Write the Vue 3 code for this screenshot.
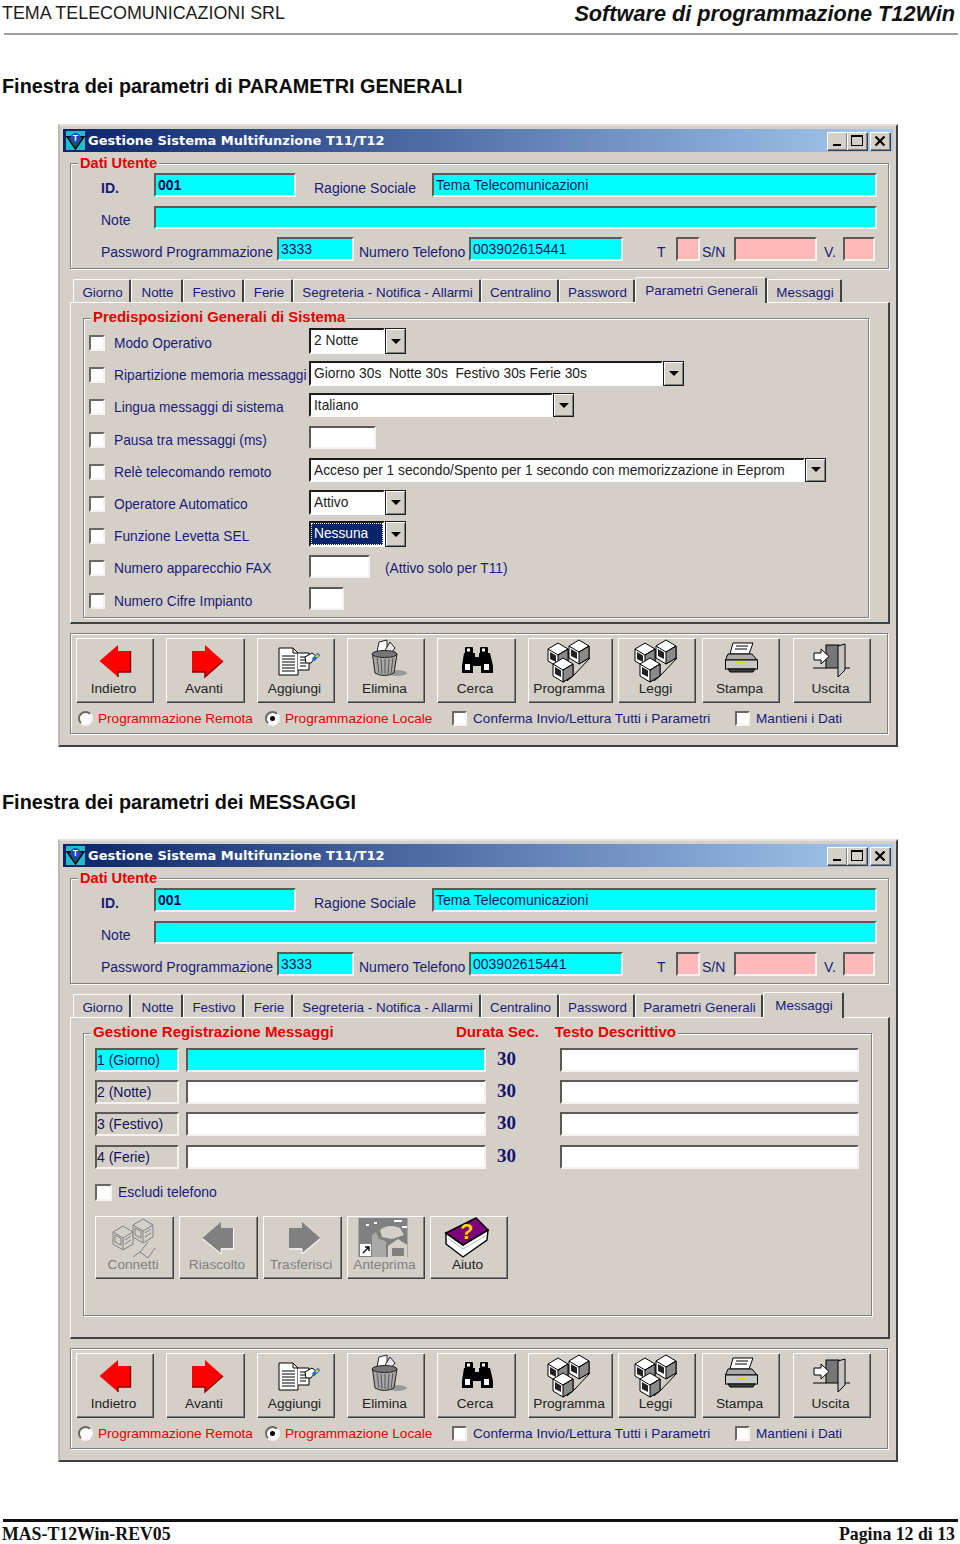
<template>
  <div class="page">
    <svg class="sprites" aria-hidden="true">
      <defs>
        <g id="i-back">
          <polygon points="6.5,21 25,5 25,11 37.5,11 37.5,32 25,32 25,37" fill="#f00" />
          <path d="M37.5 11V32H25V37" stroke="#800" stroke-width="1.4" fill="none" />
        </g>
        <g id="i-fwd">
          <polygon points="9,11 22,11 22,5 40,21 22,37 22,32 9,32" fill="#f00" />
          <path d="M9 32H22V37L40 21" stroke="#800" stroke-width="1.4" fill="none" />
        </g>
        <g id="i-back-off">
          <polygon points="6.5,20 25,4 25,10 37.5,10 37.5,30 25,30 25,35" fill="#808080" />
          <path d="M37.5 10V31H25V36L7 21" stroke="#fff" stroke-width="1" fill="none" />
        </g>
        <g id="i-fwd-off">
          <polygon points="9,10 22,10 22,4 40,20 22,35 22,30 9,30" fill="#808080" />
          <path d="M9 31H22V36L40 21" stroke="#fff" stroke-width="1" fill="none" />
        </g>
        <g id="i-add" stroke="#000" fill="#fff">
          <path d="M5 8H19L24 13V35H5Z" />
          <path d="M19 8V13H24" fill="none" />
          <path d="M8 16H21M8 19H21M8 22H21M8 25H21M8 28H21M8 31H21" fill="none" />
          <path d="M24 13H35V30H24" />
          <path d="M26 17h6M26 20h6M26 23h6M26 26h6" fill="none" />
          <path d="M31 17L38 13L42 16L37 23H32Z" />
          <path d="M39 20L45 14" stroke="#1e6ad0" stroke-width="3.5" fill="none" />
          <path d="M42 17L44 15" stroke="#ffd800" stroke-width="2" fill="none" />
        </g>
        <g id="i-del">
          <ellipse cx="33" cy="33" rx="10" ry="3" fill="#999" />
          <polygon points="13,12 15,2 23,0 23,12" fill="#fff" stroke="#222" />
          <polygon points="20,12 26,2 31,8 27,13" fill="#e8e8e8" stroke="#222" />
          <path d="M8.5 14L11 33Q20 38 30 33L33 14Z" fill="#a8a8a8" stroke="#222" />
          <path d="M13 18L15 33M17 19L18 34M21 19V34M25 19L24 34M29 18L27 33" stroke="#555" fill="none" />
          <ellipse cx="20.5" cy="14" rx="12.5" ry="3.5" fill="#777" stroke="#222" />
        </g>
        <g id="i-find">
          <rect x="11" y="7" width="8" height="7" rx="1" fill="#000" />
          <rect x="26" y="7" width="8" height="7" rx="1" fill="#000" />
          <path d="M10 13H21V17H25V13H36L39 26V33H27V26H19V33H8V26Z" fill="#000" />
          <rect x="13" y="8.5" width="3" height="3" fill="#fff" />
          <rect x="28" y="8.5" width="3" height="3" fill="#fff" />
          <rect x="11" y="24" width="5" height="6" fill="#fff" />
          <rect x="30" y="24" width="5" height="6" fill="#fff" />
        </g>
        <g id="pc">
          <polygon points="0,6 10,0 20,6 20,18 10,24 0,18" fill="#fff" stroke="#000" />
          <polygon points="10,12 20,6 20,18 10,24" fill="#8a8a8a" stroke="#000" />
          <polygon points="2,9 8,12.5 8,19 2,16" fill="#222" />
          <path d="M0 6L10 12L20 6" fill="none" stroke="#000" />
        </g>
        <g id="pc-off">
          <polygon points="0,6 10,0 20,6 20,18 10,24 0,18" fill="#d4d0c8" stroke="#808080" />
          <path d="M0 6L10 12L20 6M10 12V24M12 14L18 10M12 18L18 14" fill="none" stroke="#808080" />
          <polygon points="2,9 8,12.5 8,19 2,16" fill="none" stroke="#808080" />
        </g>
        <g id="i-net">
          <path d="M19 41L26 35L42 18" stroke="#000" fill="none" />
          <use href="#pc" x="0" y="3" />
          <use href="#pc" x="21" y="0" />
          <use href="#pc" x="5" y="18" />
        </g>
        <g id="i-net-off">
          <path d="M21 39L28 34L36 40L43 30M28 34L36 24" stroke="#808080" fill="none" />
          <use href="#pc-off" x="1" y="8" />
          <use href="#pc-off" x="21" y="1" />
        </g>
        <g id="i-print" stroke="#000">
          <polygon points="14,3 34,3 30,14 11,14" fill="#fff" />
          <path d="M17 6H29M16 9H28" fill="none" />
          <polygon points="9,14 33,14 38,20 6.5,20" fill="#aaa" />
          <rect x="6.5" y="20" width="32" height="9" fill="#c8c8c8" />
          <rect x="19" y="22" width="8" height="2" fill="#e8d800" stroke="none" />
          <polygon points="9,29 36,29 34,32 11,32" fill="#444" />
        </g>
        <g id="i-exit" stroke="#000">
          <path d="M3 28H16M34 28H40" fill="none" />
          <rect x="16" y="5" width="13" height="23" fill="#777" />
          <polygon points="28,6 35,4 35,30 28,37" fill="#c4c4c4" />
          <polygon points="4,13 11,13 11,9 19,16.5 11,24 11,20 4,20" fill="#fff" />
        </g>
        <g id="i-preview">
          <rect x="-5.5" y="0" width="49" height="39" fill="#808080" />
          <path d="M16 12Q24 5 36 10L40 17L28 21L18 19Z" fill="#d4d0c8" />
          <path d="M8 26V17L12 14L15 21L22 23V39H8Z" fill="#a8a8a8" />
          <path d="M24 28L34 21L43 27V39H24Z" fill="#d4d0c8" />
          <path d="M28 30H40V38H28Z" fill="#808080" />
          <path d="M2 6H5V8H2ZM10 4H13V6H10ZM30 2H38V4H30ZM38 8H43V10H38Z" fill="#fff" />
          <rect x="-4" y="26" width="11" height="12" fill="#fff" />
          <path d="M-1 35L4 30M1 29H5V33" stroke="#000" stroke-width="1.4" fill="none" />
        </g>
        <g id="i-help" stroke="#000">
          <polygon points="-1,15 16,27 41,12 40,22 16,39 -1,26" fill="#fff" stroke-width="1.4" />
          <path d="M1 20L16 31L40 17" fill="none" stroke="#b8b8c8" />
          <polygon points="-1,15 29,0 41,12 16,27" fill="#800080" stroke-width="1.6" />
          <text x="13" y="21" class="book-mark" stroke="none">?</text>
        </g>
      </defs>
    </svg>

    <header class="doc-head">
      <span class="company">TEMA TELECOMUNICAZIONI SRL</span>
      <span class="software">Software di programmazione T12Win</span>
    </header>
    <div class="doc-rule"></div>

    <template v-for="win in windows" :key="win.heading">
      <h2 class="heading" :class="{ 'heading-second': win.kind === 'msg' }">{{ win.heading }}</h2>

      <section class="window">
        <div class="titlebar">
          <svg class="logo" viewBox="0 0 20 20">
            <rect width="20" height="20" fill="#23bccc" />
            <polygon points="1,6 19,6 10,19" fill="#0f5a6a" stroke="#000" stroke-width="1.5" />
            <circle cx="10" cy="7.5" r="5.5" fill="#2048b0" />
            <text x="7" y="11" class="logo-t">T</text>
          </svg>
          <span class="title-text">Gestione Sistema Multifunzione T11/T12</span>
          <div class="win-btns">
            <span class="win-btn"><i class="glyph-min"></i></span>
            <span class="win-btn"><i class="glyph-max"></i></span>
            <span class="win-btn win-close">
              <svg width="12" height="10" viewBox="0 0 12 10"><path d="M1.5 0.5L10.5 9.5M10.5 0.5L1.5 9.5" stroke="#000" stroke-width="2.2" /></svg>
            </span>
          </div>
        </div>

        <div class="group dati">
          <div class="legend">Dati Utente</div>
          <div class="dati-row row-id">
            <span class="lbl lbl-bold" style="width: 53px">ID.</span>
            <span class="field cyan strong" style="width: 142px">001</span>
            <span class="lbl" style="width: 118px; margin-left: 18px">Ragione Sociale</span>
            <span class="field cyan" style="width: 445px">Tema Telecomunicazioni</span>
          </div>
          <div class="dati-row row-note">
            <span class="lbl" style="width: 53px">Note</span>
            <span class="field cyan" style="width: 723px"></span>
          </div>
          <div class="dati-row row-pass">
            <template v-for="cell in passRow" :key="cell.key">
              <span v-if="cell.text && !cell.tone" class="lbl" :style="boxStyle(cell)">{{ cell.text }}</span>
              <span v-else class="field" :class="cell.tone" :style="boxStyle(cell)">{{ cell.text }}</span>
            </template>
          </div>
        </div>

        <div class="tabs">
          <span
            v-for="tab in win.tabs"
            :key="tab.name"
            class="tab"
            :class="{ active: tab.name === win.active }"
            :style="{ width: tab.w + 'px' }"
          >{{ tab.name }}</span>
        </div>

        <div class="tab-panel">
          <!-- parametri generali -->
          <div v-if="win.kind === 'gen'" class="group params">
            <div class="legend legend-big">Predisposizioni Generali di Sistema</div>
            <div v-for="row in paramRows" :key="row.label" class="param-row">
              <span class="check"></span>
              <span class="lbl param-lbl">{{ row.label }}</span>
              <div v-if="row.combo" class="combo" :style="{ width: row.w + 'px', height: row.h + 'px' }">
                <span class="combo-text" :class="{ focused: row.focus }">{{ row.value }}</span>
                <span class="combo-btn"><i class="arrow-down"></i></span>
              </div>
              <span v-else class="field white param-field" :style="{ width: row.w + 'px', height: row.h + 'px' }"></span>
              <span v-if="row.note" class="lbl param-note">{{ row.note }}</span>
            </div>
          </div>

          <!-- messaggi -->
          <div v-else class="group msgs">
            <div class="legend legend-big legend-msg">
              <span class="lg-a">Gestione Registrazione Messaggi</span>
              <span class="lg-b">Durata Sec.</span>
              <span class="lg-c">Testo Descrittivo</span>
            </div>
            <div v-for="(m, i) in messages" :key="m" class="msg-row">
              <span class="field msg-name" :class="i === 0 ? 'cyan' : 'flat'">{{ m }}</span>
              <span class="field msg-wide" :class="i === 0 ? 'cyan' : 'white'"></span>
              <span class="msg-secs">30</span>
              <span class="field white msg-desc"></span>
            </div>
            <div class="exclude">
              <span class="check"></span>
              <span class="lbl exclude-lbl">Escludi telefono</span>
            </div>
            <div class="msg-btns">
              <button v-for="b in msgButtons" :key="b.label" class="tool-btn tool-short" :class="{ off: b.off }" :style="{ width: b.w + 'px' }">
                <svg class="ico" viewBox="0 0 44 40"><use :href="'#i-' + b.icon" /></svg>
                <span class="tool-label">{{ b.label }}</span>
              </button>
            </div>
          </div>
        </div>

        <div class="group footer-panel">
          <div class="tool-row">
            <button v-for="b in toolButtons" :key="b.label" class="tool-btn" :style="{ width: b.w + 'px', marginLeft: b.ml + 'px' }">
              <svg class="ico" viewBox="0 0 44 40"><use :href="'#i-' + b.icon" /></svg>
              <span class="tool-label">{{ b.label }}</span>
            </button>
          </div>
          <div class="opt-row">
            <label v-for="o in options" :key="o.label" class="opt" :style="{ width: o.w + 'px' }">
              <span v-if="o.radio" class="radio" :class="{ on: o.on }"></span>
              <span v-else class="check small"></span>
              <span class="opt-text" :class="{ red: o.radio }">{{ o.label }}</span>
            </label>
          </div>
        </div>
      </section>
    </template>

    <div class="foot-rule"></div>
    <footer class="doc-foot">
      <span>MAS-T12Win-REV05</span>
      <span>Pagina 12 di 13</span>
    </footer>
  </div>
</template>

<script setup>
const baseTabs = [
  { name: 'Giorno', w: 58 },
  { name: 'Notte', w: 52 },
  { name: 'Festivo', w: 61 },
  { name: 'Ferie', w: 49 },
  { name: 'Segreteria - Notifica - Allarmi', w: 188 },
  { name: 'Centralino', w: 78 },
  { name: 'Password', w: 76 },
]

const windows = [
  {
    kind: 'gen',
    heading: 'Finestra dei parametri di PARAMETRI GENERALI',
    active: 'Parametri Generali',
    tabs: [...baseTabs, { name: 'Parametri Generali', w: 132 }, { name: 'Messaggi', w: 75 }],
  },
  {
    kind: 'msg',
    heading: 'Finestra dei parametri dei MESSAGGI',
    active: 'Messaggi',
    tabs: [...baseTabs, { name: 'Parametri Generali', w: 128 }, { name: 'Messaggi', w: 81 }],
  },
]

const passRow = [
  { key: 'a', text: 'Password Programmazione', w: 176 },
  { key: 'b', text: '3333', w: 77, tone: 'cyan' },
  { key: 'c', text: 'Numero Telefono', w: 110, ml: 5 },
  { key: 'd', text: '003902615441', w: 154, tone: 'cyan' },
  { key: 'e', text: 'T', w: 19, ml: 34 },
  { key: 'f', text: '', w: 24, tone: 'pink' },
  { key: 'g', text: 'S/N', w: 32, ml: 2 },
  { key: 'h', text: '', w: 83, tone: 'pink' },
  { key: 'i', text: 'V.', w: 19, ml: 7 },
  { key: 'j', text: '', w: 32, tone: 'pink' },
]

const paramRows = [
  { label: 'Modo Operativo', combo: true, value: '2 Notte', w: 97, h: 26 },
  { label: 'Ripartizione memoria messaggi', combo: true, value: 'Giorno 30s  Notte 30s  Festivo 30s Ferie 30s', w: 375, h: 25 },
  { label: 'Lingua messaggi di sistema', combo: true, value: 'Italiano', w: 265, h: 24 },
  { label: 'Pausa tra messaggi (ms)', w: 67, h: 23 },
  { label: 'Relè telecomando remoto', combo: true, value: 'Acceso per 1 secondo/Spento per 1 secondo con memorizzazione in Eeprom', w: 517, h: 24 },
  { label: 'Operatore Automatico', combo: true, value: 'Attivo', w: 97, h: 25 },
  { label: 'Funzione Levetta SEL', combo: true, value: 'Nessuna', w: 97, h: 26, focus: true },
  { label: 'Numero apparecchio FAX', w: 61, h: 23, note: '(Attivo solo per T11)' },
  { label: 'Numero Cifre Impianto', w: 35, h: 23 },
]

const messages = ['1 (Giorno)', '2 (Notte)', '3 (Festivo)', '4 (Ferie)']

const msgButtons = [
  { label: 'Connetti', icon: 'net-off', w: 78, off: true },
  { label: 'Riascolto', icon: 'back-off', w: 78, off: true },
  { label: 'Trasferisci', icon: 'fwd-off', w: 78, off: true },
  { label: 'Anteprima', icon: 'preview', w: 77, off: true },
  { label: 'Aiuto', icon: 'help', w: 77 },
]

const toolButtons = [
  { label: 'Indietro', icon: 'back', w: 77, ml: 0 },
  { label: 'Avanti', icon: 'fwd', w: 78, ml: 13 },
  { label: 'Aggiungi', icon: 'add', w: 77, ml: 13 },
  { label: 'Elimina', icon: 'del', w: 77, ml: 13 },
  { label: 'Cerca', icon: 'find', w: 78, ml: 13 },
  { label: 'Programma', icon: 'net', w: 84, ml: 13 },
  { label: 'Leggi', icon: 'net', w: 77, ml: 6 },
  { label: 'Stampa', icon: 'print', w: 77, ml: 7 },
  { label: 'Uscita', icon: 'exit', w: 77, ml: 14 },
]

const options = [
  { label: 'Programmazione Remota', radio: true, w: 187 },
  { label: 'Programmazione Locale', radio: true, on: true, w: 187 },
  { label: 'Conferma Invio/Lettura Tutti i Parametri', w: 283 },
  { label: 'Mantieni i Dati', w: 120 },
]

const boxStyle = (cell) => ({ width: cell.w + 'px', marginLeft: (cell.ml || 0) + 'px' })
</script>

<style>
html, body { background: #fff; }
</style>

<style scoped>
.page {
  width: 960px;
  height: 1544px;
  overflow: hidden;
  background: #fff;
  font-family: "Liberation Sans", Arial, sans-serif;
  color: #000;
}

.sprites { position: absolute; width: 0; height: 0; }

.doc-head {
  display: flex;
  justify-content: space-between;
  align-items: center;
  height: 25px;
  padding: 1px 5px 0 2px;
  margin-bottom: 7px;
}
.company { font-size: 17.9px; color: #1c1c1c; }
.software { font-size: 21.7px; font-weight: bold; font-style: italic; color: #111; }
.doc-rule { height: 2px; margin: 0 2px 0 4px; background: #a0a0a0; }

.heading {
  margin: 39px 0 26px 2px;
  font-size: 19.85px;
  line-height: 24px;
  font-weight: bold;
  color: #0c0c0c;
}
.heading-second { margin: 43px 0 25px 2px; }

/* ---- window ---- */
.window {
  box-sizing: border-box;
  width: 840px;
  height: 623px;
  margin-left: 58px;
  padding: 3px;
  background: #d4d0c8;
  border: 2px solid;
  border-color: #e4e2dc #404040 #404040 #bcb9b2;
  font-size: 14px;
}

.titlebar {
  display: flex;
  align-items: center;
  height: 23px;
  padding-left: 3px;
  background: linear-gradient(90deg, #0a246a 0%, #a6caf0 100%);
}
.logo { width: 19px; height: 19px; flex: none; }
.logo-t { font: bold 9px "Liberation Sans", sans-serif; fill: #fff; }
.title-text {
  margin-left: 3px;
  font-family: "DejaVu Sans", sans-serif;
  font-size: 13px;
  font-weight: bold;
  color: #fff;
  white-space: nowrap;
}
.win-btns { display: flex; margin-left: auto; margin-right: 3px; }
.win-btn {
  box-sizing: border-box;
  display: flex;
  align-items: center;
  justify-content: center;
  width: 20px;
  height: 18px;
  background: #d4d0c8;
  box-shadow: inset 1px 1px #fff, inset -1px -1px #808080, 1px 1px #404040;
}
.win-close { margin-left: 3px; }
.glyph-min { width: 8px; height: 2px; margin-top: 9px; background: #000; }
.glyph-max { box-sizing: border-box; width: 12px; height: 11px; border: 1px solid #000; border-top-width: 2px; }

.group {
  position: relative;
  box-sizing: border-box;
  border: 1px solid #808080;
  box-shadow: inset 1px 1px #fff, 1px 1px #fff;
}
.legend {
  position: absolute;
  top: -8px;
  left: 7px;
  padding: 0 2px;
  background: #d4d0c8;
  color: #e60000;
  font-size: 14.6px;
  line-height: 15px;
  font-weight: bold;
  white-space: nowrap;
}

.dati {
  width: 819px;
  height: 106px;
  margin: 11px 0 0 7px;
  padding-left: 30px;
}
.dati-row { display: flex; align-items: center; }
.row-id { height: 24px; margin-top: 9px; }
.row-note { height: 23px; margin-top: 9px; }
.row-pass { height: 24px; margin-top: 8px; }

.lbl {
  display: block;
  flex: none;
  margin-top: 5px;
  color: #1a1a78;
  white-space: nowrap;
}
.lbl-bold { font-weight: bold; }

.field {
  box-sizing: border-box;
  display: block;
  flex: none;
  align-self: stretch;
  padding-left: 2px;
  border: 2px solid;
  border-color: #5c5a56 #f4f3ef #f4f3ef #5c5a56;
  line-height: 20px;
  color: #10105c;
  white-space: nowrap;
}
.cyan { background: #00ffff; }
.pink { background: #ffb9b9; }
.white { background: #fff; }
.flat { background: #d4d0c8; }
.strong { font-weight: bold; color: #00004a; }

/* ---- tabs ---- */
.tabs {
  display: flex;
  align-items: flex-end;
  height: 25px;
  margin: 8px 0 0 10px;
}
.tab {
  box-sizing: border-box;
  position: relative;
  flex: none;
  height: 23px;
  padding-left: 2px;
  border-top: 1px solid #fff;
  border-left: 1px solid #fff;
  border-right: 2px solid #404040;
  border-radius: 2px 2px 0 0;
  text-align: center;
  font-size: 13.4px;
  line-height: 25px;
  color: #1a1a78;
  white-space: nowrap;
}
.tab.active {
  z-index: 1;
  height: 26px;
  margin-bottom: -1px;
  line-height: 26px;
  background: #d4d0c8;
}

.tab-panel {
  box-sizing: border-box;
  width: 820px;
  height: 322px;
  margin-left: 7px;
  padding: 15px 0 0 12px;
  border-top: 1px solid #fff;
  border-left: 1px solid #fff;
  border-right: 2px solid #404040;
  border-bottom: 2px solid #404040;
}

/* ---- parametri generali ---- */
.params {
  width: 786px;
  height: 300px;
  padding: 6px 0 0 5px;
}
.legend-big { top: -9px; font-size: 14.9px; }
.param-row {
  display: flex;
  align-items: center;
  height: 32.2px;
  font-size: 13.75px;
}
.param-field { align-self: center; }
.check {
  box-sizing: border-box;
  flex: none;
  width: 16px;
  height: 16px;
  margin-top: 4px;
  background: #fff;
  border: 2px solid;
  border-color: #6a6863 #f4f3ef #f4f3ef #6a6863;
}
.check.small { width: 15px; height: 15px; margin-top: 0; }
.param-lbl { width: 204px; padding-left: 9px; box-sizing: border-box; }
.param-note { margin-left: 15px; }

.combo { display: flex; flex: none; background: #fff; }
.combo-text {
  flex: 1;
  min-width: 0;
  padding-left: 3px;
  border: 2px solid;
  border-color: #1c1c1c #fff #fff #1c1c1c;
  line-height: 22px;
  color: #222;
  white-space: pre;
  overflow: hidden;
}
.combo-text.focused { background: #0a246a; color: #fff; outline: 1px dotted #fff; outline-offset: -3px; }
.combo-btn {
  box-sizing: border-box;
  display: flex;
  align-items: center;
  justify-content: center;
  flex: none;
  width: 21px;
  background: #d4d0c8;
  border: 1px solid #1c1c1c;
  box-shadow: inset 1px 1px #fff, inset -1px -1px #808080;
}
.arrow-down {
  width: 0;
  height: 0;
  border-left: 5px solid transparent;
  border-right: 5px solid transparent;
  border-top: 5px solid #000;
}

/* ---- messaggi ---- */
.msgs {
  width: 789px;
  height: 283px;
  padding: 10px 0 0 11px;
}
.legend-msg { top: -10px; display: flex; width: 587px; box-sizing: border-box; font-size: 15.1px; }
.lg-a { width: 364px; }
.lg-b { width: 99px; }
.msg-row {
  display: flex;
  align-items: center;
  height: 32.2px;
}
.msg-row .field { align-self: center; height: 24px; }
.msg-name { width: 84px; padding-left: 0; }
.msg-wide { width: 300px; margin-left: 7px; }
.msg-secs {
  flex: none;
  width: 74px;
  padding-left: 11px;
  box-sizing: border-box;
  margin-top: -2px;
  font: bold 19px "Liberation Serif", serif;
  color: #14146e;
}
.msg-desc { width: 299px; }
.exclude {
  display: flex;
  align-items: center;
  height: 17px;
  margin-top: 11px;
}
.exclude .check { margin-top: 0; width: 17px; height: 17px; }
.exclude-lbl { margin: 0 0 0 6px; }
.msg-btns { display: flex; gap: 6px; margin-top: 15px; }

/* ---- pulsanti ---- */
.tool-btn {
  box-sizing: border-box;
  display: flex;
  flex-direction: column;
  align-items: center;
  flex: none;
  height: 64px;
  padding: 2px 0 0;
  border: 0;
  background: #d4d0c8;
  box-shadow: inset 1px 1px #fff, inset -1px -1px #808080, 1px 1px #404040;
  font: inherit;
  font-size: 13.7px;
  color: #222;
}
.tool-short { height: 62px; }
.ico { flex: none; width: 44px; height: 40px; overflow: visible; }
.tool-label { position: relative; padding-right: 2px; line-height: 18px; white-space: nowrap; }
.tool-short .tool-label { line-height: 14px; }
.tool-btn.off { color: #808080; }
.book-mark { font: bold 22px "Liberation Sans", sans-serif; fill: #ffd800; }

.footer-panel {
  width: 818px;
  height: 101px;
  margin: 9px 0 0 7px;
  padding: 4px 0 0 5px;
}
.tool-row { display: flex; }
.opt-row {
  display: flex;
  align-items: center;
  height: 20px;
  margin: 6px 0 0 2px;
  font-size: 13.6px;
}
.opt { display: flex; align-items: center; flex: none; }
.radio {
  box-sizing: border-box;
  position: relative;
  flex: none;
  width: 15px;
  height: 15px;
  border: 2px solid;
  border-color: #6a6863 #f4f3ef #f4f3ef #6a6863;
  border-radius: 50%;
  background: #fff;
}
.radio.on::after {
  content: "";
  position: absolute;
  left: 3px;
  top: 3px;
  width: 5px;
  height: 5px;
  border-radius: 50%;
  background: #000;
}
.opt-text { margin-left: 6px; color: #1a1a78; white-space: nowrap; }
.opt-text.red { margin-left: 5px; color: #e60000; }

/* ---- piede pagina ---- */
.foot-rule { height: 3px; margin: 57px 2px 0 3px; background: #111; }
.doc-foot {
  display: flex;
  justify-content: space-between;
  margin-top: 2px;
  padding: 0 5px 0 2px;
  font-family: "Liberation Serif", serif;
  font-size: 17.8px;
  line-height: 21px;
  font-weight: bold;
  color: #111;
}
</style>
